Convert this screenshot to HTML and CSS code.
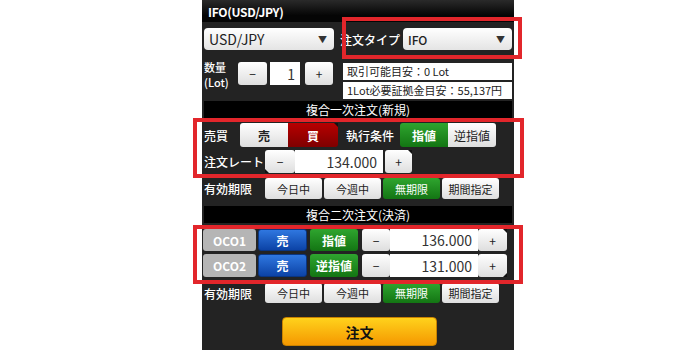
FILE: index.html
```html
<!DOCTYPE html>
<html lang="ja">
<head>
<meta charset="utf-8">
<title>IFO(USD/JPY)</title>
<link rel="stylesheet" href="styles.css">
</head>
<body>
<div class="stage">
  <div class="panel">
    <div class="hdr">IFO(USD/JPY)</div>

    <div class="rowA">
      <div class="select sel-pair">USD/JPY<span class="caret">▼</span></div>
      <div class="otype">
        <span class="lab">注文タイプ</span>
        <div class="select sel-ifo">IFO<span class="caret">▼</span></div>
      </div>
    </div>

    <div class="rowB">
      <div class="qty">
        <div class="qlab"><span class="ql">数量</span><span class="ql">(Lot)</span></div>
        <div class="b white r w29">−</div>
        <div class="inp w30 ml3">1</div>
        <div class="b white r w28 ml5">+</div>
      </div>
      <div class="info">
        <div class="ibox">取引可能目安：0 Lot</div>
        <div class="ibox">1Lot必要証拠金目安：55,137円</div>
      </div>
    </div>

    <div class="sec sec1">複合一次注文(新規)</div>

    <div class="row row-bb">
      <span class="lab lab-bb">売買</span>
      <div class="seg">
        <div class="b white rl w48 bold">売</div>
        <div class="b red rr w50 bold grip">買</div>
      </div>
      <span class="lab lab-jk">執行条件</span>
      <div class="seg">
        <div class="b green rl w48 bold">指値</div>
        <div class="b white rr w48">逆指値</div>
      </div>
    </div>

    <div class="row row-rate">
      <span class="lab lab-rate">注文レート</span>
      <div class="b white r w30 gripbl">−</div>
      <div class="inp w88">134.000</div>
      <div class="b white r w27 ml2 grip">+</div>
    </div>

    <div class="row row-exp">
      <span class="lab lab-exp">有効期限</span>
      <div class="b white r w57 sm">今日中</div>
      <div class="b white r w57 sm ml2">今週中</div>
      <div class="b green r w57 sm ml2">無期限</div>
      <div class="b white r w57 sm ml2">期間指定</div>
    </div>

    <div class="sec sec2">複合二次注文(決済)</div>

    <div class="row row-oco1">
      <div class="b gray r w53">OCO1</div>
      <div class="b blue r w49 ml2 bold">売</div>
      <div class="b green r w48 ml3 bold">指値</div>
      <div class="b white r w28 ml4">−</div>
      <div class="inp w88">136.000</div>
      <div class="b white r w29 grip">+</div>
    </div>

    <div class="row row-oco2">
      <div class="b gray r w53">OCO2</div>
      <div class="b blue r w49 ml2 bold">売</div>
      <div class="b green r w48 ml3 bold">逆指値</div>
      <div class="b white r w28 ml4">−</div>
      <div class="inp w88">131.000</div>
      <div class="b white r w29 gripbr">+</div>
    </div>

    <div class="row row-exp2">
      <span class="lab lab-exp">有効期限</span>
      <div class="b white r w57 sm">今日中</div>
      <div class="b white r w57 sm ml2">今週中</div>
      <div class="b green r w57 sm ml2">無期限</div>
      <div class="b white r w57 sm ml2">期間指定</div>
    </div>

    <div class="order">注文</div>
  </div>

  <div class="mark mark1"></div>
  <div class="mark mark2"></div>
  <div class="mark mark3"></div>
</div>
</body>
</html>
```

FILE: styles.css
```css
* { box-sizing: border-box; }
html, body { margin: 0; padding: 0; background: #fff; }
body {
  font-family: "Noto Sans CJK JP", "Noto Sans", sans-serif;
  color: #222;
}
.stage {
  position: relative;
  width: 700px;
  height: 350px;
  overflow: hidden;
  background: #fff;
}
.panel {
  margin-left: 202px;
  width: 312px;
  height: 350px;
  background: #232323;
  padding: 0 2px;
  display: flex;
  flex-direction: column;
}
.hdr {
  height: 22px;
  margin: 0 -2px;
  padding-left: 6px;
  background: linear-gradient(#2a2a2a, #050505 70%);
  color: #fff;
  font-size: 12px;
  font-weight: bold;
  line-height: 23px;
  letter-spacing: -0.3px;
}

/* top rows */
.rowA {
  display: flex;
  align-items: center;
  margin-top: 6px;
  height: 22px;
}
.select {
  height: 22px;
  border-radius: 4px;
  background: linear-gradient(#ffffff, #e4e4e4);
  display: flex;
  align-items: center;
  justify-content: space-between;
  padding: 0 7px 0 5px;
  color: #222;
}
.caret { font-size: 9px; color: #333; }
.sel-pair { width: 130px; font-size: 14px; }
.otype { margin-left: auto; display: flex; align-items: center; }
.otype .lab { margin-right: 3px; font-size: 12px; }
.sel-ifo { width: 109px; font-size: 12px; font-weight: 500; }

.rowB {
  display: flex;
  margin-top: 12px;
  height: 36px;
}
.qty { display: flex; align-items: flex-start; }
.qty .b, .qty .inp { height: 23px; }
.qlab {
  width: 34px;
  margin-top: -2px;
  display: flex;
  flex-direction: column;
  align-items: flex-start;
  color: #fff;
  font-size: 11px;
  font-weight: 500;
}
.ql { display: block; height: 15px; line-height: 15px; white-space: nowrap; }
.info {
  margin-left: auto;
  width: 169px;
  display: flex;
  flex-direction: column;
  gap: 2px;
  margin-top: 1px;
}
.ibox {
  height: 17px;
  background: #fff;
  font-size: 11px;
  line-height: 17px;
  padding-left: 4px;
  color: #222;
  white-space: nowrap;
}

/* section bars */
.sec {
  background: #000;
  color: #fff;
  font-size: 12px;
  text-align: center;
  height: 17px;
  line-height: 17px;
}
.sec1 { margin-top: 3px; }
.sec2 { margin-top: 7px; }

/* rows */
.row { display: flex; align-items: stretch; }
.row-bb { margin-top: 5px; height: 24px; }
.row-rate { margin-top: 3px; height: 23px; }
.row-exp { margin-top: 5px; height: 21px; }
.row-oco1 { margin-top: 6px; height: 22px; margin-left: -1px; }
.row-oco2 { margin-top: 3px; height: 23px; margin-left: -1px; }
.row-exp2 { margin-top: 6px; height: 20px; }

.lab {
  color: #fff;
  font-size: 12px;
  font-weight: 500;
  white-space: nowrap;
  display: flex;
  align-items: center;
}
.lab-bb { width: 36px; }
.lab-jk { width: 62px; padding-left: 8px; }
.lab-rate { width: 61px; }
.lab-exp { width: 61px; font-size: 12px; }

/* buttons */
.b {
  position: relative;
  display: flex;
  align-items: center;
  justify-content: center;
  height: 100%;
  font-size: 12px;
  white-space: nowrap;
}
.r { border-radius: 3px; }
.rl { border-radius: 3px 0 0 3px; }
.rr { border-radius: 0 3px 3px 0; }
.bold { font-weight: bold; }
.sm { font-size: 11px; }
.white { background: linear-gradient(#ffffff, #dedede); color: #222; }
.green { background: linear-gradient(#2fa52f, #137513); color: #fff; }
.red { background: linear-gradient(#b80000, #7e0000); color: #fff; }
.blue { background: linear-gradient(#2f77e0, #0c43a6); color: #fff; border: 1px solid #0a3580; }
.gray { background: #b5b5b5; color: #fff; font-weight: bold; font-size: 12px; }
.seg { display: flex; height: 100%; }

.inp {
  display: flex;
  align-items: center;
  justify-content: flex-end;
  padding-right: 6px;
  background: #fff;
  font-size: 14px;
  color: #333;
  height: 100%;
}
.qty .inp { padding-right: 5px; }

.grip::after {
  content: "";
  position: absolute;
  top: 0; right: 0;
  border-top: 4px solid #111;
  border-left: 4px solid transparent;
}
.gripbl::after {
  content: "";
  position: absolute;
  bottom: 0; left: 0;
  border-bottom: 4px solid #111;
  border-right: 4px solid transparent;
}
.gripbr::after {
  content: "";
  position: absolute;
  bottom: 0; right: 0;
  border-bottom: 4px solid #111;
  border-left: 4px solid transparent;
}

/* widths / gaps */
.w27 { width: 27px; } .w28 { width: 28px; } .w29 { width: 29px; }
.w30 { width: 30px; } .w48 { width: 48px; } .w49 { width: 49px; }
.w50 { width: 50px; } .w53 { width: 53px; } .w57 { width: 57px; }
.w88 { width: 88px; }
.ml2 { margin-left: 2px; } .ml3 { margin-left: 3px; }
.ml4 { margin-left: 4px; } .ml5 { margin-left: 5px; }

.order {
  margin-top: 14px;
  margin-left: 78px;
  width: 155px;
  height: 29px;
  border-radius: 4px;
  border: 1px solid #c98200;
  background: linear-gradient(#ffd21c, #f59800);
  color: #111;
  font-size: 14px;
  font-weight: bold;
  display: flex;
  align-items: center;
  justify-content: center;
}

/* red annotation frames */
.mark {
  position: absolute;
  border: 4px solid #e2262b;
}
.mark1 { left: 342px; top: 17px; width: 180px; height: 42px; }
.mark2 { left: 193px; top: 118px; width: 331px; height: 60px; }
.mark3 { left: 193px; top: 225px; width: 330px; height: 59px; }
```
